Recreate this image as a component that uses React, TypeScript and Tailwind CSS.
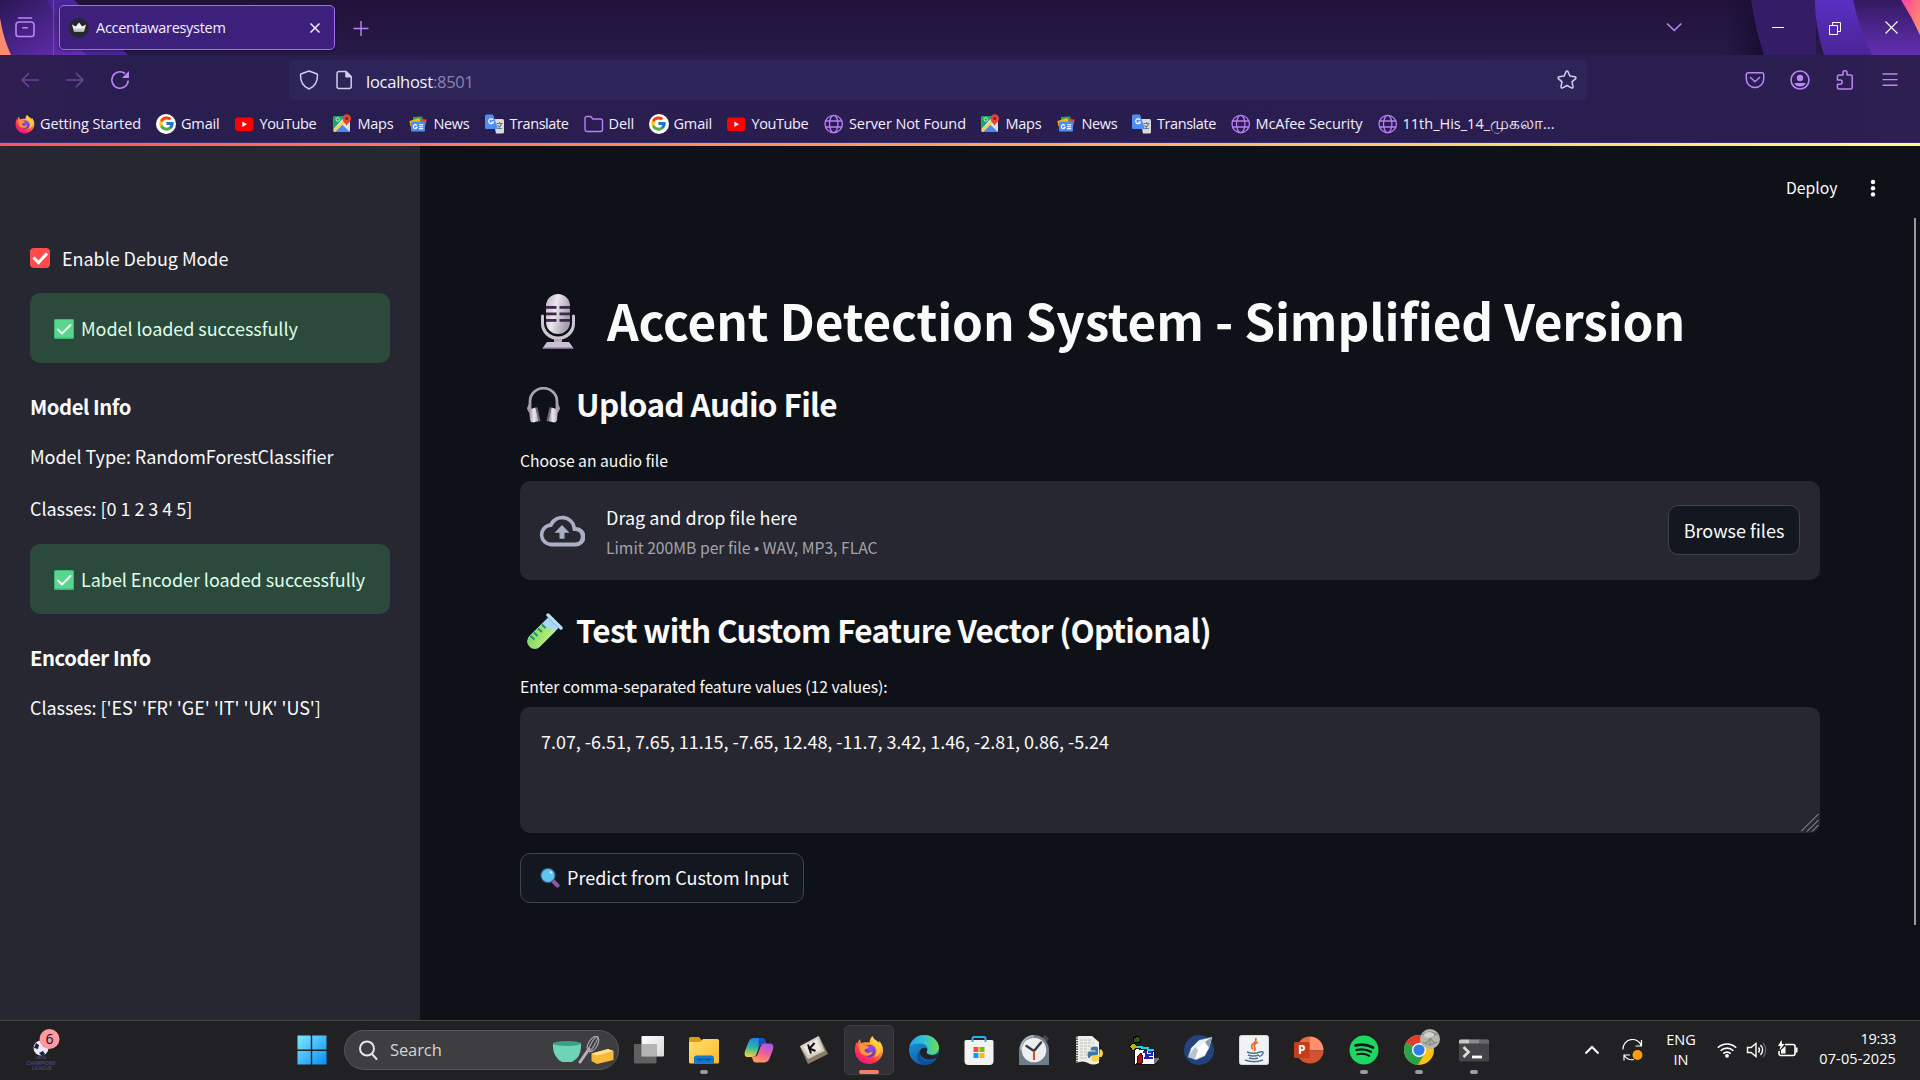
import React from "react";
import { FcGoogle } from "react-icons/fc";

const SRC = "font-['Noto_Sans_CJK_SC',sans-serif]";
const SEG = "font-['Open_Sans','Noto_Sans',sans-serif]";

/* ---------- emoji-style drawings ---------- */

const MicEmoji = () => (
  <svg width="36" height="56" viewBox="0 0 36 56">
    <defs>
      <linearGradient id="mic1" x1="0" x2="1" y1="0" y2="0.4">
        <stop offset="0" stopColor="#b9b1bd" />
        <stop offset="0.45" stopColor="#ece8ee" />
        <stop offset="1" stopColor="#a89dae" />
      </linearGradient>
    </defs>
    <path d="M1 22 q0-1.500 1.500-1.500 t1.500 1.500 v7 a14 13.500 0 0 0 28 0 v-7 q0-1.500 1.500-1.500 t1.500 1.500 v8 a17 16 0 0 1 -34 0z" fill="#cdc4d2" />
    <rect x="5" y="20" width="26" height="21.500" rx="12" fill="#0e1117" />
    <rect x="6" y="0" width="24" height="40" rx="12" fill="url(#mic1)" />
    <g fill="#3c2a4d">
      <rect x="6" y="12" width="10.500" height="2.800" />
      <rect x="19.500" y="12" width="10.500" height="2.800" />
      <rect x="6" y="18.500" width="10.500" height="2.800" />
      <rect x="19.500" y="18.500" width="10.500" height="2.800" />
      <rect x="6" y="25" width="10.500" height="2.800" />
      <rect x="19.500" y="25" width="10.500" height="2.800" />
    </g>
    <rect x="14" y="45" width="8" height="5" fill="#b5aabb" />
    <path d="M7 48h22l4 5.500q.5 1.500-1.500 1.500h-27q-2 0-1.500-1.500z" fill="#cbc2d0" />
    <path d="M2.500 53.500h31q.3 1.500-1.500 1.500h-28q-1.800 0-1.500-1.500z" fill="#7d6a8c" />
  </svg>
);

const HeadphonesEmoji = () => (
  <svg width="33" height="36" viewBox="0 0 33 36">
    <defs>
      <linearGradient id="hp1" x1="0" x2="1">
        <stop offset="0" stopColor="#8f8695" />
        <stop offset="0.5" stopColor="#eeeaf0" />
        <stop offset="1" stopColor="#a79dac" />
      </linearGradient>
    </defs>
    <path d="M3 22V14.500a13.500 13.300 0 0 1 27 0V22" fill="none" stroke="#aaa3ae" strokeWidth="2.800" />
    <path d="M2.500 17.500l-1.500 4 2 4M30.500 17.500l1.500 4-2 4" fill="none" stroke="#a59cab" strokeWidth="2" />
    <path d="M2 22.500l6.500-2 3.500 13.500-6 1.500q-2.500 0-3-2.500z" fill="url(#hp1)" />
    <path d="M31 22.500l-6.500-2L21 34l6 1.500q2.500 0 3-2.500z" fill="url(#hp1)" />
    <path d="M8.500 20.500l2-.3 3 13.800-2 .8zM24.500 20.500l-2-.3-3 13.800 2 .8z" fill="#6f6579" />
  </svg>
);

const TubeEmoji = () => (
  <svg width="36" height="36" viewBox="0 0 36 36">
    <defs>
      <linearGradient id="tb1" x1="0" x2="1" y1="0.3" y2="0.7">
        <stop offset="0" stopColor="#7bd45f" />
        <stop offset="1" stopColor="#c6f58a" />
      </linearGradient>
    </defs>
    <path d="M21 4.500l10.500 10.500-18.500 18.500a7.400 7.400 0 0 1-10.500-10.500z" fill="#a9d8f7" />
    <path d="M14 12l14.500 6-15.500 15.500a7.400 7.400 0 0 1-10.500-10.500z" fill="url(#tb1)" />
    <path d="M21 2l13 13" stroke="#b8dffc" strokeWidth="3.400" strokeLinecap="round" />
    <path d="M15 11.500l3.500 3.500M11 15.500l4 3.500M7 19.500l3.500 3.500M3.500 23l4 3.500" stroke="#1c9269" strokeWidth="1.800" />
  </svg>
);

const CheckEmoji = () => (
  <svg width="20" height="20" viewBox="0 0 20 20" className="mt-[6px] block shrink-0">
    <rect width="20" height="20" rx="1.500" fill="#3fb777" />
    <rect x="1" y="1" width="18" height="17.500" rx="1" fill="#58d68d" />
    <path d="M4 10.500l4 4L16.500 6" fill="none" stroke="#f3fff6" strokeWidth="2" strokeLinecap="round" strokeLinejoin="round" />
  </svg>
);

const LensEmoji = () => (
  <svg width="20" height="21" viewBox="0 0 20 21">
    <path d="M12 13l5.500 5.500" stroke="#8b5a9a" strokeWidth="4" strokeLinecap="round" />
    <circle cx="8" cy="8.500" r="7.600" fill="#4a5f9e" />
    <circle cx="8" cy="8.500" r="6.400" fill="#5ec6ee" />
    <circle cx="11" cy="5.500" r="1.300" fill="#c9f1ff" />
  </svg>
);

/* ---------- brand marks ---------- */

const Firefox = ({ s, id }: { s: number; id: string }) => (
  <svg width={s} height={s} viewBox="0 0 32 32">
    <defs>
      <linearGradient id={id + "a"} x1="0.85" y1="0" x2="0.2" y2="1">
        <stop offset="0.05" stopColor="#fff44f" />
        <stop offset="0.35" stopColor="#ffa436" />
        <stop offset="0.65" stopColor="#ff3b4f" />
        <stop offset="1" stopColor="#e5127d" />
      </linearGradient>
      <radialGradient id={id + "b"} cx="0.6" cy="0.3">
        <stop offset="0" stopColor="#a24bff" />
        <stop offset="1" stopColor="#5b3fc9" />
      </radialGradient>
    </defs>
    <path d="M20 1c-2.500 2-3.500 4.600-3.200 7C12 7.500 9.500 7.800 8 8.500 7 7.500 6.500 6 6.500 4.500 5 5.500 4 7.500 3.800 9.500 3.300 9 3 8.500 3 7.500 1.300 10.500.8 13.500 1 17c.5 8 7 14 15 14s15-6.500 15-14.500c0-4-1.500-8-4.500-10.500.3 1 .4 1.800.3 2.500C25 5.500 20.500 5 20 1z" fill={"url(#" + id + "a)"} />
    <circle cx="16.500" cy="17" r="6.600" fill={"url(#" + id + "b)"} />
    <path d="M5 10c3-1 5-.5 7 1.500 2 .3 3.500.5 4 1-1 2-3 2.200-4.500 3-.8 1 .5 3 2.500 3.500 2.500.5 4-1.500 6-1-1 3-4 4.500-7 4C7 21.500 5 16 5 10z" fill="#ff9640" />
    <path d="M17 8c3 .5 6 3 7 6.500 1 4-.5 7.500-3 9.500 5-1 8-5.500 7.500-10.500C27 9 24 6.500 21 4.500c0 1-2 3-4 3.500z" fill="#ffd23f" opacity=".75" />
  </svg>
);

const GoogleIcon = () => (
  <span className="flex h-5 w-5 items-center justify-center rounded-full bg-white">
    <FcGoogle size={17} />
  </span>
);

const YouTubeIcon = () => (
  <svg width="20" height="20" viewBox="0 0 20 20">
    <rect x="0" y="3.500" width="18.500" height="13.500" rx="3" fill="#f00" />
    <path d="M7.300 7.500v5.600l4.700-2.800z" fill="#fff" />
  </svg>
);

const MapsIcon = () => (
  <svg width="20" height="20" viewBox="0 0 20 20">
    <rect x="0.500" y="2" width="16.500" height="16" rx="1.500" fill="#dfe3e6" />
    <path d="M.5 3.500A1.500 1.500 0 0 1 2 2H12L.5 15z" fill="#1fa463" />
    <path d="M2 18l7-7.500 8 7.500z" fill="#4a89f3" />
    <path d="M1 17L13 6" stroke="#fbd24b" strokeWidth="2.400" />
    <circle cx="4.800" cy="5.500" r="1.800" fill="none" stroke="#d8f5e3" strokeWidth=".9" />
    <path d="M13.500 12c-.6-3-4-3.500-4-7.500a4 4 0 0 1 8.500 0c0 4-3.900 4.500-4.500 7.500z" fill="#e0473a" />
    <circle cx="13.700" cy="4.500" r="1.500" fill="#8c1d14" />
  </svg>
);

const NewsIcon = () => (
  <svg width="20" height="20" viewBox="0 0 20 20">
    <path d="M4 3l9.500-.5v7H4z" fill="#2fa84f" />
    <path d="M12 4.500l5.800 1.300-1.500 6-5-1z" fill="#ea4335" />
    <path d="M.5 7l10-3 1.500 6-10.500 2.500z" fill="#fbbc04" />
    <rect x="2" y="7.500" width="14" height="10" rx="1" fill="#4a8df6" />
    <path d="M7.800 11.400a2 2 0 1 0 .3 1.900H6.500" fill="none" stroke="#fff" strokeWidth="1.100" />
    <path d="M10 10.800h4.200M10 12.700h4.200M10 14.600h4.200" stroke="#fff" strokeWidth="1.100" />
  </svg>
);

const TranslateIcon = () => (
  <svg width="20" height="20" viewBox="0 0 20 20">
    <path d="M8 5h9.500a1.500 1.500 0 0 1 1.500 1.500V18a1.500 1.500 0 0 1-1.500 1.500H11z" fill="#d9dadc" />
    <path d="M11.500 9.500h6M14.500 8v1.500M16.500 9.500c-.5 2.500-2 4-4 5M12.500 11c1 1.800 2.500 3 4.500 3.500" fill="none" stroke="#6b7680" strokeWidth="1.100" />
    <path d="M1.500.5H8l5 14.500H1.500A1.500 1.500 0 0 1 0 13.500V2A1.500 1.500 0 0 1 1.500.5z" fill="#4f8df5" />
    <path d="M8 5.800a2.400 2.400 0 1 0 .4 2.200H6" fill="none" stroke="#fff" strokeWidth="1.200" />
  </svg>
);

const FolderIcon = () => (
  <svg width="20" height="20" viewBox="0 0 20 20" fill="none" stroke="#b97ff5" strokeWidth="1.400">
    <path d="M1 4.500A2 2 0 0 1 3 2.500h3.800l2 2.500H16.500a2 2 0 0 1 2 2v8.500a2 2 0 0 1-2 2H3a2 2 0 0 1-2-2z" />
  </svg>
);

const GlobeIcon = () => (
  <svg width="20" height="20" viewBox="0 0 20 20" fill="none" stroke="#b97ff5" strokeWidth="1.300">
    <circle cx="9.700" cy="10" r="8.700" />
    <ellipse cx="9.700" cy="10" rx="4.200" ry="8.700" />
    <path d="M1.500 7h16.400M1.500 13h16.400" />
  </svg>
);

/* ---------- browser chrome ---------- */

function TabBar() {
  return (
    <div className={"relative flex h-[55px] items-center bg-[#22143c] " + SEG}>
      <svg className="absolute inset-0" width="1920" height="55" viewBox="0 0 1920 55">
        <defs>
          <linearGradient id="tbg" x1="0" x2="0" y1="0" y2="1">
            <stop offset="0" stopColor="#21123a" />
            <stop offset="1" stopColor="#261a47" />
          </linearGradient>
          <linearGradient id="pl" x1="0" x2="1" y1="0" y2="1">
            <stop offset="0" stopColor="#2a1757" />
            <stop offset="1" stopColor="#6a30bb" />
          </linearGradient>
          <linearGradient id="pd" x1="0" x2="0" y1="0" y2="1">
            <stop offset="0" stopColor="#331a61" />
            <stop offset="1" stopColor="#632fb3" />
          </linearGradient>
          <linearGradient id="pb" x1="0" x2="0" y1="0" y2="1">
            <stop offset="0" stopColor="#5a2fc2" />
            <stop offset="1" stopColor="#4a2496" />
          </linearGradient>
          <linearGradient id="pk" x1="0" x2="1" y1="0" y2="0.6">
            <stop offset="0" stopColor="#ff3ea0" />
            <stop offset="1" stopColor="#ff8a70" />
          </linearGradient>
          <linearGradient id="sh" x1="0" x2="1">
            <stop offset="0" stopColor="#1a0f33" stopOpacity="0" />
            <stop offset="1" stopColor="#170c30" />
          </linearGradient>
        </defs>
        <rect width="1920" height="55" fill="url(#tbg)" />
        <path d="M0 0h74q28 26 54 55H0z" fill="#4a2596" />
        <path d="M0 0h47q14 30 39 55H0z" fill="url(#pl)" />
        <path d="M0 18q3 20 11 37H0z" fill="#ff8a70" />
        <path d="M1725 0h26q4 28 13 55h-40z" fill="url(#sh)" />
        <path d="M1751 0h65v55h-52q-9-27-13-55z" fill="#351c66" />
        <path d="M1815 0h45l20 55h-56q-9-27-9-55z" fill="url(#pb)" />
        <path d="M1853 0h67v55h-48q-14-30-19-55z" fill="url(#pd)" />
        <path d="M1901 0h19v35q-8-18-19-35z" fill="url(#pk)" />
      </svg>
      <div className="relative flex h-full w-[54px] items-center border-r border-[#6d4f9c] pl-[15px]">
        <svg width="21" height="21" viewBox="0 0 21 21" fill="none" stroke="#bd85f7" strokeWidth="1.600" strokeLinecap="round">
          <path d="M3.500 1h13" />
          <path d="M1 8a3 3 0 0 1 3-3h12a3 3 0 0 1 3 3v9a2.500 2.500 0 0 1-2.500 2.500h-13A2.500 2.500 0 0 1 1 17zM7.800 10.700h4.500" />
        </svg>
      </div>
      <div className="relative ml-[5px] flex h-[45px] w-[276px] items-center rounded-[5px] border border-[#a56cf0] bg-[#3d1f7c] pl-[9px] shadow-[0_1px_3px_#0006]">
        <svg width="20" height="20" viewBox="0 0 20 20">
          <circle cx="10" cy="10" r="10" fill="#262730" />
          <path d="M3 6.500l3.800 2L10 4.500l3.200 4 3.800-2-2 7H5z" fill="#f4f4f4" />
          <path d="M5 10.500l10 0-.5 3H5z" fill="#c6c6c8" />
        </svg>
        <span className="ml-[7px] mt-[1px] whitespace-nowrap text-[14.500px] leading-5 tracking-[-0.290px] text-[#f3eefc]">Accentawaresystem</span>
        <svg className="ml-auto mr-[13px]" width="12" height="12" viewBox="0 0 12 12" stroke="#f3eefc" strokeWidth="1.500">
          <path d="M1.500 1.500l9 9M10.500 1.500l-9 9" />
        </svg>
      </div>
      <svg className="relative ml-[18px]" width="16" height="16" viewBox="0 0 16 16" stroke="#bd85f7" strokeWidth="1.400">
        <path d="M.5 8.500h15M8 1v15" />
      </svg>
      <svg className="relative ml-auto mr-[88px]" width="18" height="11" viewBox="0 0 18 11" fill="none" stroke="#bd85f7" strokeWidth="1.600">
        <path d="M2 1.500l7.200 7L16.400 1.500" />
      </svg>
      <svg className="relative mr-[43px]" width="14" height="14" viewBox="0 0 14 14" stroke="#fff" strokeWidth="1">
        <path d="M1 6.500h12" />
      </svg>
      <svg className="relative mr-[42px]" width="14" height="14" viewBox="0 0 14 14" stroke="#fff" fill="none" strokeWidth="1">
        <path d="M1.500 4.500h8v9h-8zM4.500 4.500v-3h8v9h-3" />
      </svg>
      <svg className="relative mr-[21px]" width="15" height="15" viewBox="0 0 15 15" stroke="#fff" strokeWidth="1.100">
        <path d="M1.500 1.500l12 12M13.500 1.500l-12 12" />
      </svg>
    </div>
  );
}

function NavBar() {
  return (
    <div className={"flex h-[50px] items-center " + SEG}>
      <svg className="ml-[20px]" width="20" height="20" viewBox="0 0 20 20" fill="none" stroke="#6b4696" strokeWidth="1.500">
        <path d="M19 10H2M9 3L2 10l7 7" />
      </svg>
      <svg className="ml-[25px]" width="20" height="20" viewBox="0 0 20 20" fill="none" stroke="#6b4696" strokeWidth="1.500">
        <path d="M1 10h17M11 3l7 7-7 7" />
      </svg>
      <svg className="ml-[25px]" width="20" height="20" viewBox="0 0 20 20" fill="none" stroke="#bd85f7" strokeWidth="1.600">
        <path d="M18.200 10.500A8.200 8.200 0 1 1 15 3.500" />
        <path d="M19 1v7h-7z" fill="#bd85f7" stroke="none" />
      </svg>
      <div className="ml-[159px] flex h-10 w-[1298px] items-center rounded-[5px] bg-[#2d255a] pl-[10px]">
        <svg width="20" height="20" viewBox="0 0 20 20" fill="none" stroke="#d6cbea" strokeWidth="1.500" strokeLinejoin="round">
          <path d="M10 1l7.500 2.800c.7.300 1 .8 1 1.400C18.500 12 16 16.500 10 19 4 16.500 1.500 12 1.500 5.200c0-.6.300-1.100 1-1.400z" />
        </svg>
        <svg className="ml-[15px]" width="20" height="20" viewBox="0 0 20 20" fill="none" stroke="#d6cbea" strokeWidth="1.500" strokeLinejoin="round">
          <path d="M5 1.500h7l5.200 5.200v9.800a2 2 0 0 1-2 2H5a2 2 0 0 1-2-2v-13a2 2 0 0 1 2-2z" />
          <path d="M12 1.500v5.200h5.200z" fill="#d6cbea" />
        </svg>
        <span className="ml-[12px] mt-[3px] whitespace-nowrap text-[16.500px] leading-6 tracking-[-0.250px] text-[#f6f2fd]">
          localhost<span className="text-[#8e82ad]">:8501</span>
        </span>
        <svg className="ml-auto mr-[10px]" width="20" height="20" viewBox="0 0 20 20" fill="none" stroke="#d6cbea" strokeWidth="1.500" strokeLinejoin="round">
          <path d="M10 1c.5 0 .8.300 1 .7l2 4.400 4.900.6c1 .1 1.400 1.200.7 1.900l-3.600 3.300 1 4.800c.2 1-.8 1.700-1.600 1.200L10 15.500l-4.400 2.400c-.8.500-1.800-.2-1.600-1.200l1-4.800-3.600-3.300c-.7-.7-.3-1.800.7-1.900l4.900-.6 2-4.400c.2-.4.500-.7 1-.7z" />
        </svg>
      </div>
      <div className="ml-auto mr-[20px] flex items-center gap-[25px] text-[#bd85f7]">
        <svg width="20" height="20" viewBox="0 0 20 20" fill="none" stroke="currentColor" strokeWidth="1.500" strokeLinecap="round" strokeLinejoin="round">
          <path d="M3 2.700h14a1.700 1.700 0 0 1 1.700 1.700V9A8.700 8.400 0 0 1 1.300 9V4.400A1.700 1.700 0 0 1 3 2.700zM5.500 7.500L10 11.800l4.500-4.300" />
        </svg>
        <svg width="20" height="20" viewBox="0 0 20 20" fill="none" stroke="currentColor" strokeWidth="1.600">
          <circle cx="10" cy="10" r="9" />
          <circle cx="10" cy="8" r="3.200" fill="currentColor" stroke="none" />
          <path d="M4.200 13h11.600a6.500 6.500 0 0 1-11.600 0z" fill="currentColor" stroke="none" />
        </svg>
        <svg width="20" height="20" viewBox="0 0 20 20" fill="none" stroke="currentColor" strokeWidth="1.500" strokeLinejoin="round">
          <path d="M4 5h4V2.800a2 2 0 0 1 4 0V5h3.600a1.600 1.600 0 0 1 1.600 1.600v10.900a1.600 1.600 0 0 1-1.600 1.600H4a1.600 1.600 0 0 1-1.600-1.600V14.200h2.700a2.100 2.100 0 0 0 0-4.200H2.400V6.600A1.600 1.600 0 0 1 4 5z" />
        </svg>
        <svg width="20" height="20" viewBox="0 0 20 20" fill="none" stroke="currentColor" strokeWidth="1.400">
          <path d="M2.500 4h15M2.500 9.600h15M2.500 15.200h15" />
        </svg>
      </div>
    </div>
  );
}

const bookmarks: [React.ReactNode, React.ReactNode, string][] = [
  [<Firefox s={20} id="ffb" />, "Getting Started", "w-[101px] tracking-[-0.100px]"],
  [<GoogleIcon />, "Gmail", "w-[38.500px] tracking-[-0.170px]"],
  [<YouTubeIcon />, "YouTube", "w-[58px] tracking-[-0.400px]"],
  [<MapsIcon />, "Maps", "w-[36px] tracking-[-0.240px]"],
  [<NewsIcon />, "News", "w-[36px] tracking-[-0.350px]"],
  [<TranslateIcon />, "Translate", "w-[59px] tracking-[-0.430px]"],
  [<FolderIcon />, "Dell", "w-[25px] tracking-[-0.100px]"],
  [<GoogleIcon />, "Gmail", "w-[38px] tracking-[-0.170px]"],
  [<YouTubeIcon />, "YouTube", "w-[57.500px] tracking-[-0.400px]"],
  [<GlobeIcon />, "Server Not Found", "w-[116.500px] tracking-[-0.100px]"],
  [<MapsIcon />, "Maps", "w-[36px] tracking-[-0.240px]"],
  [<NewsIcon />, "News", "w-[35.500px] tracking-[-0.350px]"],
  [<TranslateIcon />, "Translate", "w-[58.500px] tracking-[-0.430px]"],
  [<GlobeIcon />, "McAfee Security", "w-[107px] tracking-[-0.070px]"],
  [<GlobeIcon />, <>11th_His_14_<span className="text-[16.500px]">முகலா</span>...</>, "w-[160px]"],
];

function BookmarkBar() {
  return (
    <div className={"flex h-[38px] items-center gap-[15px] border-b border-[#3a3070] pl-[15px] text-[14.500px] leading-5 text-[#f3eefc] " + SEG}>
      {bookmarks.map(([icon, label, w], i) => (
        <div key={i} className="flex items-center gap-[5px]">
          {icon}
          <span className={"whitespace-nowrap " + w}>{label}</span>
        </div>
      ))}
    </div>
  );
}

/* ---------- page ---------- */

function Sidebar() {
  return (
    <aside className="flex w-[420px] flex-col bg-[#262730] px-[30px] pt-[97px] text-[18px] leading-[30px] tracking-[-0.050px] text-[#fafafa]">
      <div className="flex h-[30px]">
        <svg className="mt-[5px]" width="20" height="20" viewBox="0 0 20 20">
          <rect width="20" height="20" rx="4" fill="#ff4b4b" />
          <path d="M3.500 9.500l5 5L17 5.500" fill="none" stroke="#fff" strokeWidth="3" />
        </svg>
        <span className="ml-[12px] whitespace-nowrap">Enable Debug Mode</span>
      </div>
      <div className="mt-[20px] flex h-[70px] rounded-[10px] bg-[#2b4a3c] px-[24px] py-[20px] text-[#dffde9]">
        <CheckEmoji />
        <span className="ml-[7px] whitespace-nowrap">Model loaded successfully</span>
      </div>
      <div className="mt-[29px] text-[20.250px] font-bold tracking-[-0.440px]">Model Info</div>
      <div className="mt-[19px]">Model Type: RandomForestClassifier</div>
      <div className="mt-[22px]">Classes: [0 1 2 3 4 5]</div>
      <div className="mt-[21px] flex h-[70px] rounded-[10px] bg-[#2b4a3c] px-[24px] py-[20px] text-[#dffde9]">
        <CheckEmoji />
        <span className="ml-[7px] whitespace-nowrap">Label Encoder loaded successfully</span>
      </div>
      <div className="mt-[29px] text-[20.250px] font-bold tracking-[-0.440px]">Encoder Info</div>
      <div className="mt-[19px]">Classes: ['ES' 'FR' 'GE' 'IT' 'UK' 'US']</div>
    </aside>
  );
}

function Main() {
  return (
    <main className="relative flex w-[1500px] flex-col bg-[#0e1117] px-[100px] text-[18px] text-[#fafafa]">
      <div className="-mr-[60px] flex h-[75px] items-start justify-end pt-[30px] text-[15.750px] leading-6">
        <span>Deploy</span>
        <svg className="ml-[30px] mr-[2.500px] mt-[2px]" width="10" height="20" viewBox="0 0 10 20" fill="#fafafa">
          <circle cx="5" cy="4" r="2.200" />
          <circle cx="5" cy="10.200" r="2.200" />
          <circle cx="5" cy="16.400" r="2.200" />
        </svg>
      </div>
      <h1 className="mt-[68px] flex h-[60px] items-start pl-[20px] text-[49.500px] font-bold leading-[62px] tracking-[-0.140px]">
        <span className="mt-[5px] w-[67px] shrink-0"><MicEmoji /></span>
        <span className="whitespace-nowrap">Accent Detection System - Simplified Version</span>
      </h1>
      <h2 className="mt-[33px] flex h-[42px] items-start pl-[7px] text-[31.500px] font-bold leading-[42px] tracking-[-0.660px]">
        <span className="mt-[5px] w-[49px] shrink-0"><HeadphonesEmoji /></span>
        <span className="whitespace-nowrap">Upload Audio File</span>
      </h2>
      <div className="mt-[25px] text-[15.750px] leading-6 tracking-[-0.030px]">Choose an audio file</div>
      <div className="mt-[8px] flex h-[99px] items-center rounded-[10px] bg-[#262730] px-[20px]">
        <svg className="-ml-[1px]" width="46" height="32" viewBox="0 0 46 32">
          <path fillRule="evenodd" fill="#a9afc5" d="M37 12A14.200 14.200 0 0 0 10.500 8.300 11.700 11.700 0 0 0 11.800 31.500H36.500A9.700 9.700 0 0 0 37 12zM36.500 27.600H11.800A7.800 7.800 0 0 1 11 12.100l2-.2 1-1.800A10.300 10.300 0 0 1 33.300 13l.6 2.900 3 .2A5.800 5.800 0 0 1 36.500 27.600zM15.500 17.700H20.500V23.700H25.500V17.700H30.500L23 10z" />
        </svg>
        <div className="ml-[21px] flex flex-col gap-[4px] pt-[2px]">
          <div className="leading-[30px]">Drag and drop file here</div>
          <div className="text-[15.750px] leading-6 tracking-[-0.020px] text-[#a3a4a9]">
            Limit 200MB per file <span className="font-['Liberation_Sans'] text-[15px]">•</span> WAV, MP3, FLAC
          </div>
        </div>
        <div className="-mt-[1px] ml-auto flex h-[50px] w-[132px] items-center justify-center rounded-[10px] border border-[#41444c] bg-[#131720]">
          <span className="whitespace-nowrap">Browse files</span>
        </div>
      </div>
      <h2 className="mt-[28px] flex h-[42px] items-start pl-[7px] text-[31.500px] font-bold leading-[42px] tracking-[-0.700px]">
        <span className="mt-[5px] w-[49px] shrink-0"><TubeEmoji /></span>
        <span className="whitespace-nowrap">Test with Custom Feature Vector (Optional)</span>
      </h2>
      <div className="mt-[25px] text-[15.750px] leading-6 tracking-[-0.030px]">Enter comma-separated feature values (12 values):</div>
      <div className="relative mt-[8px] h-[126px] rounded-[10px] bg-[#262730] pl-[21px] pt-[19px] leading-[30px] tracking-[-0.030px]">
        7.07, -6.51, 7.65, 11.15, -7.65, 12.48, -11.7, 3.42, 1.46, -2.81, 0.86, -5.24
        <svg className="absolute bottom-[1px] right-[1px]" width="18" height="18" viewBox="0 0 18 18" stroke="#a7a7ab" strokeWidth="1">
          <path d="M0 17.500L17.500 0M6 17.500L17.500 6M11 17.500L17.500 11" />
        </svg>
      </div>
      <div className="mt-[20px] flex h-[50px] w-[284px] items-center rounded-[10px] border border-[#41444c] bg-[#131720] pb-[1px] pl-[19px]">
        <LensEmoji />
        <span className="ml-[7px] whitespace-nowrap">Predict from Custom Input</span>
      </div>
      <div className="absolute right-[4px] top-[72px] h-[707px] w-[2px] bg-[#9a9a9a]" />
    </main>
  );
}

/* ---------- taskbar ---------- */

const TaskView = () => (
  <svg width="30" height="30" viewBox="0 0 30 30">
    <defs><linearGradient id="tv" x1="0" x2="1" y1="0" y2="1"><stop offset="0" stopColor="#fff" /><stop offset="1" stopColor="#d9d9d9" /></linearGradient></defs>
    <rect x="7.500" y="1" width="22.500" height="20.500" rx="1" fill="url(#tv)" />
    <rect x="0" y="9" width="22.500" height="19.500" rx="1" fill="#6b6b6b" opacity=".85" />
    <rect x="7.500" y="9" width="15" height="12.500" fill="#b5b5b5" />
  </svg>
);
const Explorer = () => (
  <svg width="30" height="30" viewBox="0 0 30 30">
    <defs><linearGradient id="ex" x1="0" x2="1" y1="0" y2="1"><stop offset="0" stopColor="#ffdf73" /><stop offset="1" stopColor="#fbb92a" /></linearGradient></defs>
    <path d="M0 3.500A1.500 1.500 0 0 1 1.500 2H10l3 3.500v5H0z" fill="#e09a0b" />
    <path d="M0 7h11l3-3h14.500A1.500 1.500 0 0 1 30 5.500V27a1.500 1.500 0 0 1-1.500 1.500h-27A1.500 1.500 0 0 1 0 27z" fill="url(#ex)" />
    <path d="M5 28.500V23a2.500 2.500 0 0 1 2.500-2.500h15A2.500 2.500 0 0 1 25 23v5.500z" fill="#1379cf" />
    <path d="M8.500 24.500h13" stroke="#0c4f94" strokeWidth="1.300" strokeLinecap="round" />
  </svg>
);
const Copilot = () => (
  <svg width="30" height="30" viewBox="0 0 30 30">
    <defs>
      <linearGradient id="c1" x1="0.500" x2="0.300" y1="0" y2="1"><stop offset="0" stopColor="#1f7fe8" /><stop offset="0.5" stopColor="#2eb6a0" /><stop offset="1" stopColor="#f3d13a" /></linearGradient>
      <linearGradient id="c2" x1="0.700" x2="0.300" y1="0" y2="1"><stop offset="0" stopColor="#a857f0" /><stop offset="0.5" stopColor="#ef5f9b" /><stop offset="1" stopColor="#ffa14e" /></linearGradient>
    </defs>
    <path d="M10 3h8q2.500 0 3.300 3l1 3h-4q-2.500 0-3.300 3l-2.500 7q-1 3-4 3H4q-4.500 0-3-6L4.500 7Q6 3 10 3z" fill="url(#c1)" />
    <path d="M15 3h3q2.500 0 3.300 3l1 3h-4q-3 0-4 4z" fill="#1b4fc0" />
    <path d="M20 27.500h-8q-2.500 0-3.300-3l-1-3h3q2.500 0 3.300-3l2.500-7q1-3 4-3H26q4.500 0 3 6L25.500 23.500Q24 27.500 20 27.500z" fill="url(#c2)" />
  </svg>
);
const KKey = () => (
  <svg width="30" height="30" viewBox="0 0 30 30">
    <path d="M1 12L20 1l9 18L9 29z" fill="#8a7c6d" />
    <path d="M1 11L19.500 1l6 15L9 24z" fill="#d6cec2" />
    <path d="M4 11.500L18 4l4.500 11L10 20z" fill="#eee8de" />
    <path d="M9 9.500l3 9M15.500 8l-5 5.500 6 2.500" stroke="#111" strokeWidth="2" fill="none" />
  </svg>
);
const Edge = () => (
  <svg width="30" height="30" viewBox="0 0 30 30">
    <defs>
      <linearGradient id="e1" x1="0" x2="1"><stop offset="0" stopColor="#2a9fe8" /><stop offset="0.5" stopColor="#2fc3cf" /><stop offset="1" stopColor="#6be04f" /></linearGradient>
      <linearGradient id="e2" x1="0" x2="0.600" y1="0" y2="1"><stop offset="0" stopColor="#1b9de2" /><stop offset="1" stopColor="#0c59a4" /></linearGradient>
    </defs>
    <circle cx="15" cy="15" r="15" fill="url(#e2)" />
    <path d="M.5 12C2 5 8 0 15 0c9 0 15 6.500 15 12.500 0 4.500-3.500 7.500-7.500 7.500-3 0-5-1.200-5-2.500 0-1 1-1.300 1-3.500 0-3-3-5.500-7-5.500C6 8.500 1.500 10 .5 12z" fill="url(#e1)" />
    <path d="M11 15c-1.500 7 4 12 10 11.500 3-.3 5-1.500 6.500-3-2 4-7 7-12.500 6.500C8 28.500 6 20 11 15z" fill="#0f4f9a" />
    <path d="M18 13.500c-2-1.500-6-.5-7 2.500-1 4 3 8.500 9 8.500 3 0 6-1 8-2.500l1.200-3.300-4.200 1.300c-4 .5-7-1-7.500-2.500 0-1 .8-1.800.5-4z" fill="#22202a" />
  </svg>
);
const Store = () => (
  <svg width="30" height="30" viewBox="0 0 30 30">
    <path d="M.5 6.500A1.500 1.500 0 0 1 2 5h26a1.500 1.500 0 0 1 1.500 1.500V26A4 4 0 0 1 25.500 30h-21A4 4 0 0 1 .5 26z" fill="#f3f3f3" />
    <path d="M8.500 7V3.500A1.500 1.500 0 0 1 10 2h10a1.500 1.500 0 0 1 1.500 1.500V7" fill="none" stroke="#26b0ee" strokeWidth="2" />
    <rect x="9.500" y="12" width="5" height="5" fill="#f25022" /><rect x="15.500" y="12" width="5" height="5" fill="#7fba00" />
    <rect x="9.500" y="18" width="5" height="5" fill="#00a4ef" /><rect x="15.500" y="18" width="5" height="5" fill="#ffb900" />
  </svg>
);
const Clock = () => (
  <svg width="30" height="30" viewBox="0 0 30 30">
    <path d="M23 3l3-3 4 4-3 3z" fill="#454b50" />
    <path d="M0 30V15a15 15 0 0 1 30 0v15z" fill="#6f7d88" />
    <path d="M2 15a13 13 0 0 1 13-14" stroke="#b9c0c6" fill="none" strokeWidth="1.500" />
    <circle cx="15" cy="15" r="12.300" fill="#eceef0" />
    <path d="M15 16l7-8.500M15 16l-7.500-5" stroke="#333b42" strokeWidth="2.400" strokeLinecap="round" />
    <path d="M15 16v9" stroke="#e04a1d" strokeWidth="2" />
  </svg>
);
const Idle = () => (
  <svg width="30" height="30" viewBox="0 0 30 30">
    <path d="M2 1h16l7 6v21q-6 3-11 0T2 28z" fill="#ededea" />
    <path d="M3 1v27" stroke="#333" strokeWidth="1.500" strokeDasharray="1.500 1" />
    <path d="M6 5h11M6 8h14M6 11h12M6 14h8M6 17h8M6 20h7M6 23h8" stroke="#bdbdb8" strokeWidth="1" strokeDasharray="3 1" />
    <path d="M17 12.500q4-2 7 0v6q0 2-2.500 2h-2.500q-3 0-3 2.500h-1.500q-2-4 0-6.500h7v-1h-5z" fill="#3f76a8" />
    <path d="M25.500 14.500h2q3 4 0 7.500h-6v1h4q0 3.500-4 3.500t-4-2.500v-1.500q0-2 2.500-2h3q2.500 0 2.500-2.500z" fill="#ffd140" />
  </svg>
);
const PixelBox = () => (
  <svg width="30" height="30" viewBox="0 0 30 30" shapeRendering="crispEdges">
    <path d="M5 13l20 4v12H5z" fill="#fff" stroke="#111" strokeWidth="1" />
    <path d="M4 3l5-2 3 3-2 4-5-1z" fill="#2a5a12" stroke="#000" />
    <path d="M0 11l5-3 4 4-5 4z" fill="#b9b414" stroke="#000" />
    <path d="M8 12h5v1h6v2h6" stroke="#15d8e8" strokeWidth="1.500" fill="none" />
    <path d="M9 21l3-3 2 4-1 6H8z" fill="#a4161c" stroke="#400" />
    <path d="M14 17h3v6h-2M19 17h4v3h-4v3h5" stroke="#2321c0" strokeWidth="2" fill="none" />
    <path d="M25 29l5-5v-1h-5z" fill="#777" />
  </svg>
);
const Shard = () => (
  <svg width="30" height="30" viewBox="0 0 30 30">
    <circle cx="15" cy="15" r="15" fill="#21437f" />
    <path d="M28 2L15 5 7 13l-3 9 8 3 9-4 4-8z" fill="#eef2f6" stroke="#5b6b80" strokeWidth=".6" />
    <path d="M28 2L14 13l-3 11 10-5 4-6z" fill="#fff" />
    <path d="M4 22l7-10 3 3-3 9z" fill="#b5c3d2" />
    <path d="M28 2l-3 11-4-6z" fill="#8b9bb0" />
  </svg>
);
const Java = () => (
  <svg width="30" height="30" viewBox="0 0 30 30">
    <rect x=".5" y=".5" width="29" height="29" rx="2" fill="#f0f2f3" stroke="#cfd8de" />
    <path d="M16.500 3q1.500 3-2 5.500t-.5 6M19 7q-5 2.500-3.500 5t-.5 4" stroke="#e2702a" strokeWidth="1.700" fill="none" />
    <path d="M8 17q7 2.500 13 0M9 20q5 2 11 0M10 23q5 1.500 9 0M6 25q9 3.500 18 0M21 17q4-1 3 1.500t-4 3" stroke="#4f7591" strokeWidth="1.500" fill="none" />
  </svg>
);
const Ppt = () => (
  <svg width="30" height="30" viewBox="0 0 30 30">
    <path d="M16 1.500v14l13.500 0A13.500 14 0 0 0 16 1.500z" fill="#ff8f6b" />
    <path d="M16 1.500A13.500 13.500 0 0 0 2.500 15.500H16z" fill="#ed6c47" />
    <path d="M2.500 15.500a13.500 13 0 0 0 27 0z" fill="#d35230" />
    <rect x="0" y="7" width="15.500" height="16" rx="1.500" fill="#c43e1c" />
    <text x="7.800" y="19.300" textAnchor="middle" fontFamily="Open Sans" fontWeight="700" fontSize="12" fill="#fff">P</text>
  </svg>
);
const Spotify = () => (
  <svg width="30" height="30" viewBox="0 0 30 30">
    <circle cx="15" cy="15" r="14.500" fill="#1ed760" />
    <g fill="none" stroke="#17181a" strokeLinecap="round">
      <path d="M6.500 10.500q9-2.500 17.500 2" strokeWidth="2.700" />
      <path d="M7.500 15q7.500-2 14.500 1.800" strokeWidth="2.300" />
      <path d="M8.300 19.300q6.500-1.500 12 1.500" strokeWidth="1.900" />
    </g>
  </svg>
);
const Chrome = () => (
  <svg width="36" height="36" viewBox="0 0 36 36" className="-mt-[6px] ml-[6px]">
    <g transform="translate(0 6)">
      <circle cx="15" cy="15" r="15" fill="#fbc116" />
      <path d="M15 15L2 7.500A15 15 0 0 1 28 7.500H15z" fill="#e33b2e" />
      <path d="M15 15L2 7.500A15 15 0 0 0 14 30l7.500-13z" fill="#2ca24c" />
      <circle cx="15" cy="15" r="7" fill="#fff" />
      <circle cx="15" cy="15" r="5.600" fill="#2f7de9" />
    </g>
    <circle cx="26" cy="10" r="10" fill="#b5b5b0" />
    <path d="M18 6q8-6 16 0M19 13q7 5 14 0M26 2v15M21 5l10 9M31 5l-9 9" stroke="#8b8b86" strokeWidth="1.200" fill="none" />
    <ellipse cx="25" cy="6" rx="5" ry="3" fill="#dddeda" opacity=".8" />
  </svg>
);
const Terminal = () => (
  <svg width="30" height="30" viewBox="0 0 30 30">
    <path d="M0 6a1.500 1.500 0 0 1 1.500-1.500h27A1.500 1.500 0 0 1 30 6v19a1.500 1.500 0 0 1-1.500 1.500h-27A1.500 1.500 0 0 1 0 25z" fill="#454547" />
    <path d="M0 8.500V6a1.500 1.500 0 0 1 1.500-1.500H10v4z" fill="#c9c9c9" />
    <path d="M10 4.500h10v4H10z" fill="#8d8d8f" /><path d="M20 4.500h8.500A1.500 1.500 0 0 1 30 6v2.500H20z" fill="#6a6a6c" />
    <path d="M4.500 12l5 5-5 5" fill="none" stroke="#d9d9d9" strokeWidth="2.800" />
    <path d="M13 22h10" stroke="#fff" strokeWidth="2.800" />
  </svg>
);

const apps: [React.ReactNode, string][] = [
  [<TaskView />, ""],
  [<Explorer />, "dot"],
  [<Copilot />, ""],
  [<KKey />, ""],
  [<Firefox s={30} id="fft" />, "active"],
  [<Edge />, ""],
  [<Store />, ""],
  [<Clock />, ""],
  [<Idle />, ""],
  [<PixelBox />, ""],
  [<Shard />, ""],
  [<Java />, ""],
  [<Ppt />, ""],
  [<Spotify />, "dot"],
  [<Chrome />, "dot"],
  [<Terminal />, "dot"],
];

function Taskbar() {
  return (
    <div className={"flex h-[60px] items-center border-t border-[#444446] bg-[#212123] pb-[1px] text-white " + SEG}>
      <div className="ml-[24px] w-[40px]">
        <svg width="40" height="44" viewBox="0 0 40 44">
          <circle cx="17" cy="20" r="7.500" fill="#e9e9f0" />
          <path d="M12 15l3 2-1 4-4-1zM15 25l4-2 2 3-3 2zM19 14l3 1v4h-3z" fill="#1d1c4a" />
          <g fill="#45457c" fontFamily="Liberation Sans" fontWeight="700" textAnchor="middle">
            <text x="17" y="31" fontSize="4">UEFA</text>
            <text x="17" y="37" fontSize="5.500" textLength="29" lengthAdjust="spacingAndGlyphs">CHAMPIONS</text>
            <text x="18" y="42" fontSize="5.500" textLength="20" lengthAdjust="spacingAndGlyphs">LEAGUE</text>
          </g>
          <circle cx="25.500" cy="11" r="10" fill="#ff99a4" />
          <text x="25.500" y="16" textAnchor="middle" fontFamily="Open Sans" fontSize="14" fill="#111">6</text>
        </svg>
      </div>
      <svg className="ml-[233px]" width="30" height="30" viewBox="0 0 30 30">
        <defs><linearGradient id="win" x1="0" x2="1" y1="0" y2="1"><stop offset="0" stopColor="#7de8ff" /><stop offset="1" stopColor="#0a8df5" /></linearGradient></defs>
        <path d="M1 .5h12.800v14H.500V1zM15.200.5H29.500v14H15.200zM.5 16h13.300v13.500H.5zM15.200 16H29.500v13.500H15.200z" fill="url(#win)" />
      </svg>
      <div className="ml-[17px] flex h-[40px] w-[275px] items-center rounded-full border border-[#565658] bg-[#3e3e40] pl-[13px]">
        <svg width="20" height="20" viewBox="0 0 20 20" fill="none" stroke="#e6e6e6" strokeWidth="2" strokeLinecap="round">
          <circle cx="9" cy="8.500" r="7" /><path d="M14 14l4.500 5" />
        </svg>
        <span className="ml-[12px] text-[16.500px] leading-6 tracking-[-0.100px] text-[#d4d4d4]">Search</span>
        <svg className="ml-auto mr-[3px]" width="62" height="28" viewBox="0 0 62 28">
          <path d="M0 7h28q1 14-9 19H9Q-1 21 0 7z" fill="#6fd3b8" />
          <ellipse cx="14" cy="7.500" rx="14" ry="2.500" fill="#3f9e88" />
          <path d="M27 26L36 13" stroke="#b9aebf" strokeWidth="3" strokeLinecap="round" />
          <g fill="none" stroke="#a9a0ae" strokeWidth="1.200"><ellipse cx="40" cy="8" rx="4.500" ry="8.500" transform="rotate(30 40 8)" /><ellipse cx="40" cy="8" rx="1.800" ry="8.500" transform="rotate(30 40 8)" /></g>
          <path d="M38.500 17.500L55 13l5.500 2v9L44 28l-5.500-3z" fill="#f7b93a" />
          <path d="M38.500 17.500L55 13l5.500 2L44 19.500z" fill="#ffe08a" />
        </svg>
      </div>
      <div className="ml-[5px] flex items-center gap-[5px]">
        {apps.map(([icon, st], i) => (
          <div key={i} className={"relative flex h-[50px] w-[50px] items-center justify-center rounded-[5px] " + (st === "active" ? "border border-[#3c3c41] bg-[#313037]" : "")}>
            {icon}
            {st === "dot" && <span className="absolute bottom-[1px] left-[21px] h-[4px] w-[8px] rounded-full bg-[#9b9b9d]" />}
            {st === "active" && <span className="absolute bottom-0 left-[14px] h-[4px] w-[20px] rounded-full bg-[#f37f66]" />}
          </div>
        ))}
      </div>
      <div className="ml-auto mr-[24px] flex items-center">
        <svg width="16" height="10" viewBox="0 0 16 10" fill="none" stroke="#fff" strokeWidth="2"><path d="M1.500 8.500L8 2l6.500 6.500" /></svg>
        <svg className="ml-[22px]" width="22" height="22" viewBox="0 0 22 22" fill="none" stroke="#fff" strokeWidth="1.200">
          <path d="M1 10.500A9.500 9.500 0 0 1 19.500 7M19.500 1v6h-6M12 20.500A9.500 9.500 0 0 1 2 16M2 21.500V16h6" />
          <circle cx="15.500" cy="16" r="5" fill="#ff9d0a" stroke="none" />
        </svg>
        <div className="-mt-[1px] ml-[20px] flex w-[34px] flex-col items-center text-[14.500px] leading-5"><span>ENG</span><span>IN</span></div>
        <svg className="ml-[19px]" width="20" height="20" viewBox="0 0 20 20" fill="none" stroke="#fff" strokeWidth="1.600">
          <path d="M.8 7.800a13 13 0 0 1 18.400 0M3.600 10.800a9 9 0 0 1 12.800 0M6.300 13.600a5.300 5.300 0 0 1 7.400 0" />
          <circle cx="10" cy="15.800" r="1.900" fill="#fff" stroke="none" />
        </svg>
        <svg className="ml-[9px]" width="22" height="20" viewBox="0 0 22 20" fill="none" stroke="#fff" strokeWidth="1.400">
          <path d="M1.500 7.500h3.500l5-4v13l-5-4H1.500zM12.500 7.500a4 4 0 0 1 0 5M14.500 5a7 7 0 0 1 0 10" />
          <path d="M17 3a10.500 10.500 0 0 1 0 14" stroke="#666" />
        </svg>
        <svg className="ml-[9px]" width="22" height="20" viewBox="0 0 22 20" fill="none" stroke="#fff" strokeWidth="1.600">
          <path d="M8 4.500h8a2 2 0 0 1 2 2v7a2 2 0 0 1-2 2H4a2 2 0 0 1-2-2V11" />
          <path d="M19.500 7.500v5" strokeWidth="2" />
          <path d="M4.500 0L1 6h2.500l-1 4.500L7.500 4H5z" fill="#fff" stroke="none" />
          <path d="M4 13.500V10l4.500-4v7.500z" fill="#fff" stroke="none" />
        </svg>
        <div className="-mt-[2px] ml-[18px] flex w-[79px] flex-col items-end whitespace-nowrap text-[14.500px] leading-5"><span className="tracking-[-0.300px]">19:33</span><span className="tracking-[0.100px]">07-05-2025</span></div>
      </div>
    </div>
  );
}

export default function App() {
  return (
    <div className="flex h-[1080px] w-[1920px] flex-col overflow-hidden bg-[#0e1117]">
      <TabBar />
      <div className="bg-[linear-gradient(90deg,#2f1f50_0px,#291e50_130px,#2a1d50_1780px,#2e1f52_1920px)]">
        <NavBar />
        <BookmarkBar />
      </div>
      <div className="h-[3px] bg-gradient-to-r from-[#ff5257] via-[#ffa060] to-[#ffff7a]" />
      <div className={"flex h-[874px] " + SRC}>
        <Sidebar />
        <Main />
      </div>
      <Taskbar />
    </div>
  );
}
